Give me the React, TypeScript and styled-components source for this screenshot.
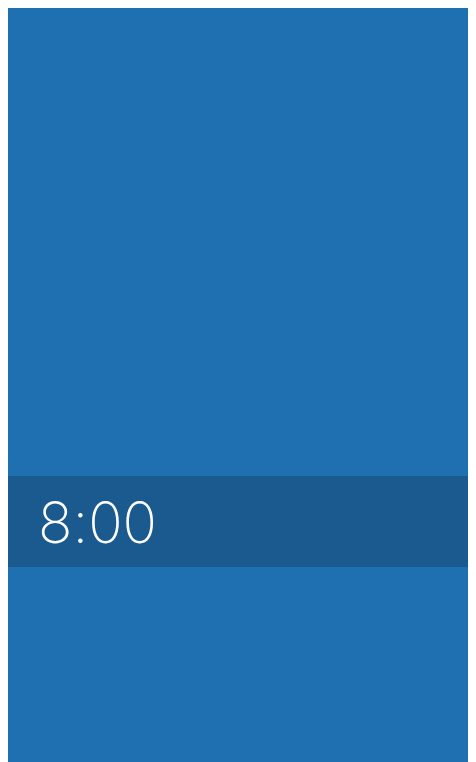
import React from 'react';
import styled, { createGlobalStyle } from 'styled-components';

const GlobalStyle = createGlobalStyle`
  body {
    margin: 8px;
    background: #ffffff;
    font-family: Inter, "Noto Sans", sans-serif;
  }
`;

const Screen = styled.div`
  height: 100vh;
  background: #1f70b0;
  display: flex;
  flex-direction: column;
  padding-top: 468px;
  box-sizing: border-box;
`;

const TimeBar = styled.div`
  height: 91px;
  background: #1b5a8e;
  display: flex;
  align-items: center;
  padding-left: 30px;
`;

const Time = styled.span`
  color: #ffffff;
  font-family: Inter, "Noto Sans", sans-serif;
  font-weight: 200;
  font-size: 57px;
  line-height: 1;
  font-feature-settings: "calt" 0;
  padding-top: 2px;
`;

export default function App() {
  return (
    <>
      <GlobalStyle />
      <Screen>
        <TimeBar>
          <Time>8:00</Time>
        </TimeBar>
      </Screen>
    </>
  );
}
